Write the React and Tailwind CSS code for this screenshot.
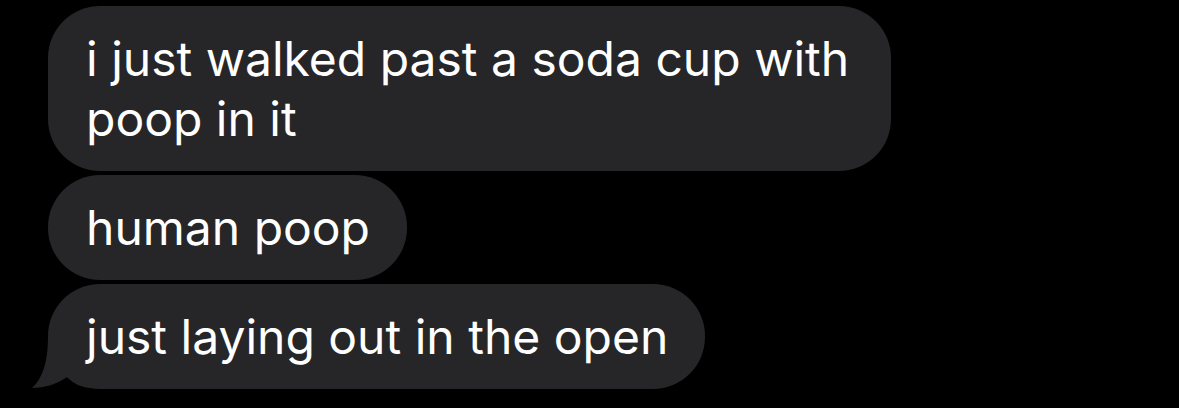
import React from "react";

const bubble =
  "relative w-fit rounded-[52px] bg-[#262628] pl-[38px] py-[22.5px] text-[48px] leading-[60px] text-white";

function Tail() {
  return (
    <svg
      className="absolute left-[-16px] bottom-0"
      width="60"
      height="52"
      viewBox="0 0 60 52"
    >
      <path
        d="M16 0 C16 24 11 41 0 51 C13 51 25 47 35 40 C42 47 50 51 60 51 L60 0 Z"
        fill="#262628"
      />
    </svg>
  );
}

export default function App() {
  return (
    <div
      className="w-[1179px] h-[408px] bg-black pl-[48px] pt-[6px] flex flex-col gap-[4px]"
      style={{ fontFamily: "Inter, 'Noto Sans', sans-serif" }}
    >
      <div className={bubble + " pr-[42px]"}>
        i just walked past a soda cup with
        <br />
        poop in it
      </div>
      <div className={bubble + " pr-[37px]"}>human poop</div>
      <div className={bubble + " pr-[37px]"}>
        <Tail />
        <span className="relative">just laying out in the open</span>
      </div>
    </div>
  );
}
